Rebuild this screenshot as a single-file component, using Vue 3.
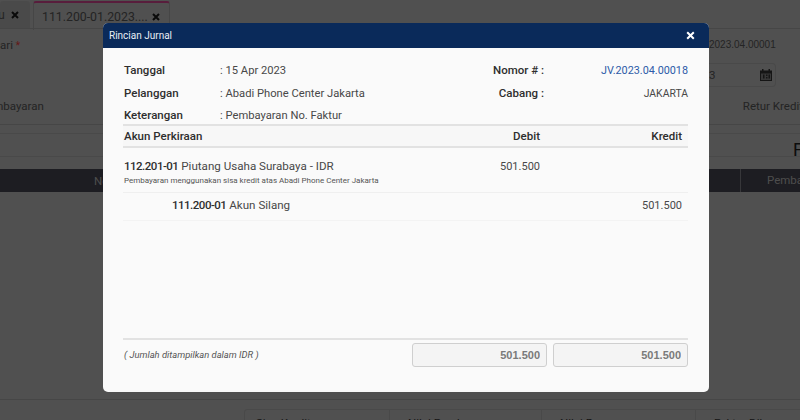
<template>
  <div class="page">
    <div class="tabs">
      <div class="tab first">
        <span>u</span>
        <svg class="x" width="8" height="8" viewBox="0 0 8 8"><path d="M1 1l6 6M7 1L1 7" /></svg>
      </div>
      <div class="tab active">
        <span>111.200-01.2023....</span>
        <svg class="x" width="8" height="8" viewBox="0 0 8 8"><path d="M1 1l6 6M7 1L1 7" /></svg>
      </div>
    </div>
    <div class="form">
      <div class="form-left">ari <b>*</b></div>
      <div class="form-right">
        <div class="ref">2023.04.00001</div>
        <div class="date">
          <span>3</span>
          <svg width="12" height="12" viewBox="0 0 12 12">
            <path d="M0 1.5h12V12H0z" fill="#2a2a2a" />
            <path d="M2 2v-2h1.5v2M8.5 2v-2H10v2" fill="#2a2a2a" />
            <path d="M1 4.5h10V11H1z" fill="#6f6f6f" />
            <path d="M3 5.5h1.5v4H3zM6 5.5h1.5v1.5H6zM6 8h1.5v1.5H6zM8.5 5.5H10v4H8.5z" fill="#2a2a2a" />
          </svg>
        </div>
      </div>
    </div>
    <div class="nav">
      <span class="nav-a">Pembayaran</span>
      <span class="nav-b">Retur Kredit</span>
    </div>
    <div class="strip"><span class="big">F</span></div>
    <div class="thead">
      <span class="th-a">No</span>
      <span class="th-b">Pembayaran</span>
    </div>
    <div class="spacer"></div>
    <div class="summary">
      <div class="card">
        <span v-for="s in summary" :key="s" class="cell">{{ s }}</span>
      </div>
    </div>

    <div class="overlay"></div>

    <div class="modal">
      <div class="modal-head">
        <span>Rincian Jurnal</span>
        <svg class="close" width="9" height="9" viewBox="0 0 9 9"><path d="M1.2 1.2l6.6 6.6M7.8 1.2L1.2 7.8" /></svg>
      </div>
      <div class="modal-body">
        <div class="info">
          <div class="info-left">
            <div v-for="r in infoLeft" :key="r.label" class="info-row">
              <label>{{ r.label }}</label>
              <span>: {{ r.value }}</span>
            </div>
          </div>
          <div class="info-right">
            <div class="info-row">
              <label>Nomor # :</label>
              <a>JV.2023.04.00018</a>
            </div>
            <div class="info-row">
              <label>Cabang :</label>
              <span class="branch">JAKARTA</span>
            </div>
          </div>
        </div>
        <div class="grid grid-head">
          <span>Akun Perkiraan</span>
          <span class="num">Debit</span>
          <span class="num">Kredit</span>
        </div>
        <div v-for="row in rows" :key="row.code" class="grid grid-row" :class="{ indent: row.credit }">
          <div>
            <div class="acct"><b>{{ row.code }}</b> {{ row.name }}</div>
            <div v-if="row.note" class="note">{{ row.note }}</div>
          </div>
          <span class="num">{{ row.debit }}</span>
          <span class="num">{{ row.credit }}</span>
        </div>
        <div class="push"></div>
        <div class="totals">
          <em>( Jumlah ditampilkan dalam IDR )</em>
          <input value="501.500" disabled />
          <input value="501.500" disabled />
        </div>
      </div>
    </div>
  </div>
</template>

<script setup>
const summary = ['Sisa Kredit', 'Nilai Pembayaran', 'Nilai Bayar', 'Faktur Dibayar']

const infoLeft = [
  { label: 'Tanggal', value: '15 Apr 2023' },
  { label: 'Pelanggan', value: 'Abadi Phone Center Jakarta' },
  { label: 'Keterangan', value: 'Pembayaran No. Faktur' },
]

const rows = [
  {
    code: '112.201-01',
    name: 'Piutang Usaha Surabaya - IDR',
    note: 'Pembayaran menggunakan sisa kredit atas Abadi Phone Center Jakarta',
    debit: '501.500',
    credit: '',
  },
  { code: '111.200-01', name: 'Akun Silang', note: '', debit: '', credit: '501.500' },
]
</script>

<style>
html,
body {
  margin: 0;
  overflow: hidden;
}
</style>

<style scoped>
.page {
  position: relative;
  width: 800px;
  height: 420px;
  overflow: hidden;
  display: flex;
  flex-direction: column;
  background: #a0a0a0;
  color: #484848;
  font-family: Roboto, "Open Sans", sans-serif;
  font-size: 11.5px;
}
.overlay {
  position: absolute;
  inset: 0;
  background: rgba(0, 0, 0, 0.5);
}

/* halaman di belakang modal */
.tabs {
  display: flex;
  gap: 3px;
  height: 29px;
  flex: none;
  padding-top: 1px;
  box-sizing: border-box;
  border-bottom: 1px solid #8c8c8c;
}
.tab {
  display: flex;
  align-items: center;
  border-radius: 3px 3px 0 0;
  font-size: 12.3px;
  white-space: nowrap;
}
.tab.first {
  width: 30px;
  box-sizing: border-box;
  justify-content: space-between;
  padding-right: 11px;
  background: #959595;
}
.tab.first span {
  margin-left: -2px;
}
.tab.active {
  width: 137px;
  height: 29px;
  box-sizing: border-box;
  padding: 0 9px 0 8px;
  justify-content: space-between;
  border: 1px solid #8c8c8c;
  border-top: 2px solid #b03a78;
  border-bottom: 0;
}
.x {
  fill: none;
  stroke: #141414;
  stroke-width: 2;
}
.form {
  height: 67px;
  flex: none;
  display: flex;
  justify-content: space-between;
}
.form-left {
  margin-top: 9px;
}
.form-left b {
  color: #c83030;
  font-weight: 400;
  font-size: 10px;
}
.form-right {
  width: 91px;
}
.ref {
  font-family: "Liberation Sans", sans-serif;
  font-size: 10px;
  margin-top: 9px;
  height: 25px;
  line-height: 14px;
  text-align: right;
  padding-right: 33px;
}
.date {
  box-sizing: border-box;
  height: 24px;
  width: 67px;
  padding: 0 3px 0 0;
  display: flex;
  align-items: center;
  justify-content: space-between;
  border: 1px solid #929292;
  border-left: 0;
  border-radius: 0 4px 4px 0;
}
.nav {
  height: 29px;
  flex: none;
  display: flex;
  justify-content: space-between;
  padding-top: 3px;
  box-sizing: border-box;
  border-bottom: 1px solid #8c8c8c;
  margin-bottom: 8px;
}
.nav-a {
  margin-left: -20px;
}
.nav-b {
  margin-right: -3px;
}
.strip {
  height: 24px;
  flex: none;
  display: flex;
  justify-content: flex-end;
  align-items: center;
  border-top: 1px solid #929292;
  border-bottom: 1px solid #929292;
  box-sizing: border-box;
  margin-bottom: 12px;
}
.big {
  font-size: 18px;
  color: #1a1a1a;
  margin-right: -3px;
  margin-top: 8px;
}
.thead {
  height: 23px;
  flex: none;
  display: flex;
  align-items: center;
  background: #3a3a44;
  color: #9a9a9a;
}
.th-a {
  margin-left: 94px;
}
.th-b {
  margin-left: auto;
  width: 59px;
  height: 100%;
  line-height: 23px;
  padding-left: 26px;
  margin-right: -26px;
  border-left: 1px solid #6f6f74;
  white-space: nowrap;
  overflow: hidden;
}
.spacer {
  flex: 1;
}
.summary {
  height: 21px;
  flex: none;
  border-top: 1px solid #8c8c8c;
  box-sizing: border-box;
  padding: 9px 0 0 244px;
}
.card {
  display: grid;
  grid-template-columns: 145px 152px 154px 120px;
  height: 40px;
  border: 1px solid #929292;
  border-radius: 3px 0 0 0;
  width: 600px;
}
.cell {
  padding: 6px 0 0 18px;
  white-space: nowrap;
  border-right: 1px solid #929292;
  color: #2c2c2c;
}
.cell:first-child {
  padding-left: 11px;
}

/* modal rincian jurnal */
.modal {
  position: absolute;
  left: 103px;
  top: 23px;
  width: 606px;
  height: 369px;
  display: flex;
  flex-direction: column;
  background: #fafafa;
  border-radius: 5px;
  overflow: hidden;
}
.modal-head {
  height: 25px;
  flex: none;
  box-sizing: border-box;
  padding: 0 14px 0 6px;
  display: flex;
  align-items: center;
  justify-content: space-between;
  background: #0a2a5a;
  color: #e8edf5;
  font-size: 10px;
}
.close {
  fill: none;
  stroke: #fff;
  stroke-width: 2;
}
.modal-body {
  flex: 1;
  display: flex;
  flex-direction: column;
  padding: 11px 21px 0 20px;
}
.info {
  display: flex;
  justify-content: space-between;
  height: 66px;
  flex: none;
}
.info-row {
  height: 22.5px;
  line-height: 22px;
  display: flex;
  align-items: baseline;
}
.info-row span {
  font-size: 11.2px;
}
.info-row label {
  font-weight: 500;
  color: #2e2e2e;
}
.info-left label {
  width: 96px;
  padding-left: 1px;
}
.info-right {
  width: 196px;
}
.info-right .info-row {
  justify-content: space-between;
}
.info-right label {
  width: 52px;
  text-align: right;
  white-space: nowrap;
}
.info-right a {
  color: #2d5aa8;
  font-size: 10.8px;
}
.info-row .branch {
  font-size: 10.4px;
}
.grid {
  display: grid;
  grid-template-columns: 1fr 142px 142px;
  padding-right: 6px;
}
.num {
  text-align: right;
  font-size: 11px;
}
.grid-head {
  height: 24px;
  line-height: 20px;
  box-sizing: border-box;
  flex: none;
  background: #f7f7f7;
  border-top: 2px solid #e2e2e2;
  border-bottom: 2px solid #e2e2e2;
  font-weight: 500;
  color: #2e2e2e;
  padding-left: 1px;
  margin-top: -1px;
}
.grid-head .num {
  font-size: 11.5px;
}
.grid-row {
  padding-left: 1px;
  flex: none;
  border-bottom: 1px solid #efefef;
  height: 45px;
  box-sizing: border-box;
  padding-top: 10px;
  line-height: 17px;
}
.grid-row.indent {
  height: 28px;
  padding-top: 4px;
  padding-left: 49px;
  border-bottom-color: #f3f3f3;
}
.acct {
  font-size: 11.6px;
}
.acct b {
  font-weight: 500;
  font-size: 11.5px;
  letter-spacing: -0.5px;
  color: #2e2e2e;
}
.note {
  font-size: 8px;
  line-height: 13px;
  margin-top: -1px;
  white-space: nowrap;
  color: #555;
}
.push {
  flex: 1;
}
.totals {
  flex: none;
  height: 54px;
  box-sizing: border-box;
  border-top: 2px solid #e2e2e2;
  padding-top: 3px;
  display: grid;
  grid-template-columns: 1fr 135px 135px;
  column-gap: 6px;
  align-items: start;
}
.totals em {
  font-size: 9.4px;
  line-height: 24px;
  color: #555;
  padding-left: 1px;
}
.totals input {
  box-sizing: border-box;
  width: 100%;
  height: 24px;
  padding: 0 6px;
  text-align: right;
  font-family: "Liberation Sans", sans-serif;
  font-size: 11px;
  font-weight: 700;
  color: #7a7a7a;
  -webkit-text-fill-color: #7a7a7a;
  opacity: 1;
  background: #f4f4f4;
  border: 1px solid #cfcfcf;
  border-radius: 3px;
}
</style>
